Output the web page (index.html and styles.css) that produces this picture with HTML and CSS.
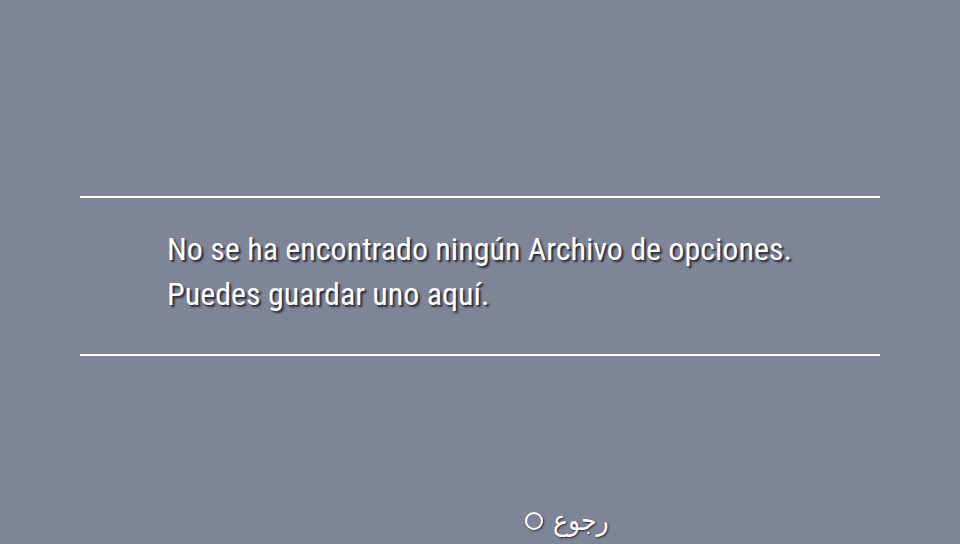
FILE: index.html
```html
<!DOCTYPE html>
<html>
<head>
<meta charset="utf-8">
<link rel="stylesheet" href="styles.css">
</head>
<body>
<div class="screen">
  <div class="panel">
    <p class="msg">No se ha encontrado ningún Archivo de opciones.<br>Puedes guardar uno aquí.</p>
  </div>
  <div class="footer">
    <span class="circle"></span>
    <span class="label" dir="rtl">رجوع</span>
  </div>
</div>
</body>
</html>
```
FILE: styles.css
```css
html, body {
  margin: 0;
  padding: 0;
  background: #7f8496;
}
.screen {
  width: 960px;
  height: 544px;
  display: flex;
  flex-direction: column;
  font-family: "Roboto Condensed", "Liberation Sans Narrow", Roboto, sans-serif;
  font-stretch: condensed;
  color: #fff;
}
.panel {
  margin: 196px 80px 0 80px;
  height: 156px;
  border-top: 2px solid #fff;
  border-bottom: 2px solid #fff;
  box-sizing: content-box;
}
.msg {
  margin: 0;
  padding: 29px 0 0 87px;
  font-size: 32px;
  line-height: 45px;
  text-shadow: 2px 2px 2px rgba(20, 22, 30, 0.85);
}
.footer {
  margin-top: 150px;
  display: flex;
  align-items: center;
  gap: 10px;
  padding-left: 525px;
}
.circle {
  width: 14px;
  height: 14px;
  border: 2.5px solid #fff;
  border-radius: 50%;
  box-shadow: 1px 1px 2px rgba(20,22,30,0.8);
}
.label {
  font-family: "DejaVu Sans", "Noto Sans", sans-serif;
  font-size: 28px;
  line-height: 30px;
  text-shadow: 1px 1px 2px rgba(20, 22, 30, 0.85);
}
```
